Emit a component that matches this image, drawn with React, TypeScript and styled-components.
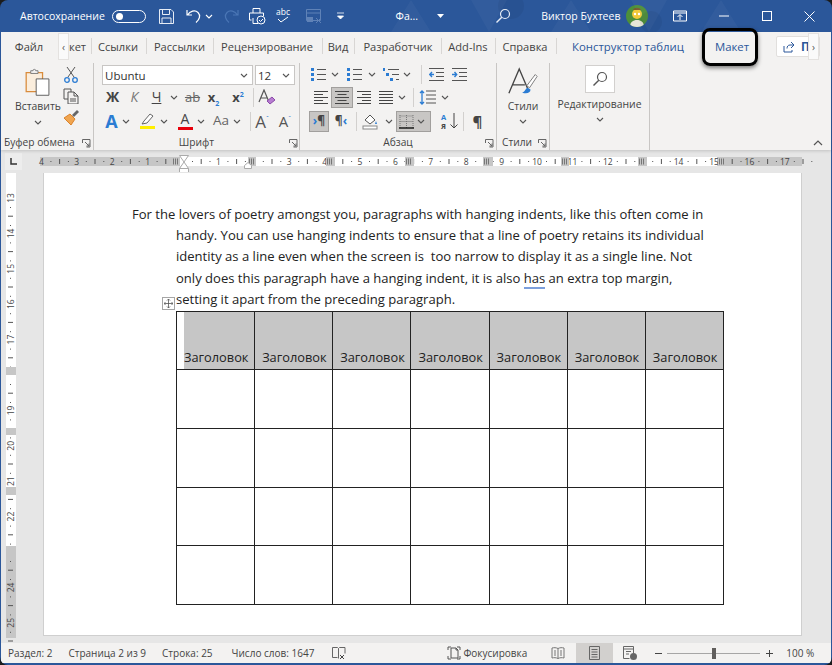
import React from "react";
import styled, { createGlobalStyle } from "styled-components";

const UI_FONT = `"Open Sans", "Noto Sans", "Liberation Sans", sans-serif`;

const tabs = [
  { label: "Ссылки", w: 40, sepMl: 6, ml: 6 },
  { label: "Рассылки", w: 51, sepMl: 8, ml: 7 },
  { label: "Рецензирование", w: 92, sepMl: 8, ml: 7 },
  { label: "Вид", w: 20, sepMl: 9, ml: 5 },
  { label: "Разработчик", w: 72, sepMl: 6, ml: 7 },
  { label: "Add-Ins", w: 42, sepMl: 7, ml: 5 },
  { label: "Справка", w: 46, sepMl: 6, ml: 6 },
];

const poetryColumns = [0, 1, 2, 3, 4, 5, 6];
const bodyRows = [0, 1, 2, 3];

const GlobalStyle = createGlobalStyle`
  html, body { margin: 0; padding: 0; background: #1c1c1c; }
  body { width: 832px; height: 665px; overflow: hidden; font-family: ${UI_FONT}; }
`;

const Window = styled.div`
  width: 832px;
  height: 665px;
  display: flex;
  flex-direction: column;
  background: #2b579a;
  border-radius: 8px;
  overflow: hidden;
  padding: 0 1px 2px 1px;
  box-sizing: border-box;
`;

const TitleBar = styled.header`
  height: 32px;
  flex: none;
  display: flex;
  align-items: center;
  position: relative;
  padding-left: 19px;
  color: #fff;
  font-size: 10.5px;
`;

const TitlePattern = styled.svg`
  position: absolute;
  left: 360px;
  top: 0;
  pointer-events: none;
`;

const TitleItem = styled.div<{ $ml?: number; $w?: number }>`
  margin-left: ${(p) => p.$ml ?? 0}px;
  width: ${(p) => (p.$w ? `${p.$w}px` : "auto")};
  display: flex;
  align-items: center;
  justify-content: center;
  white-space: nowrap;
  position: relative;
  font-weight: 500;
`;

const Toggle = styled.div`
  width: 29px;
  height: 11px;
  border: 1.5px solid #fff;
  border-radius: 8px;
  display: flex;
  align-items: center;
  padding-left: 3px;
  box-sizing: content-box;
  margin-left: 7px;
  &::before {
    content: "";
    width: 7px;
    height: 7px;
    border-radius: 50%;
    background: #fff;
  }
`;

const Avatar = styled.div`
  width: 22px;
  height: 22px;
  margin-left: 6px;
  border-radius: 50%;
  overflow: hidden;
  flex: none;
`;

const TabBar = styled.nav`
  height: 28px;
  flex: none;
  display: flex;
  align-items: center;
  position: relative;
  background: #f3f2f1;
  color: #444;
  font-size: 11.1px;
  z-index: 2;
`;

const Tab = styled.div<{ $ml: number; $w: number; $accent?: boolean }>`
  margin-left: ${(p) => p.$ml}px;
  width: ${(p) => p.$w}px;
  display: flex;
  justify-content: center;
  white-space: nowrap;
  position: relative;
  color: ${(p) => (p.$accent ? "#2b579a" : "#444")};
  font-size: ${(p) => (p.$accent ? "11.4px" : "inherit")};
  font-weight: ${(p) => (p.$accent ? 500 : 400)};
`;

const TabSep = styled.div<{ $ml: number }>`
  width: 1px;
  height: 16px;
  margin-left: ${(p) => p.$ml}px;
  background: #d8d6d4;
`;

const ScrollArrow = styled.div<{ $left: number }>`
  position: absolute;
  left: ${(p) => p.$left}px;
  top: 1px;
  width: 11px;
  height: 27px;
  background: #fafafa;
  border: 1px solid #e4e2e0;
  box-sizing: border-box;
  display: flex;
  align-items: center;
  justify-content: center;
  color: #555;
  font-size: 10px;
  line-height: 1;
`;

const Highlight = styled.div`
  position: absolute;
  left: -13px;
  right: -9px;
  top: -11px;
  bottom: -12px;
  border: 3px solid #000;
  border-radius: 8px;
  box-shadow: 0 2px 4px rgba(0, 0, 0, 0.5);
`;

const ShareButton = styled.div`
  position: absolute;
  left: 775px;
  top: 4px;
  width: 44px;
  height: 21px;
  background: #fff;
  border: 1px solid #e1dfdd;
  border-radius: 2px;
  box-sizing: border-box;
  display: flex;
  align-items: center;
  padding-left: 6px;
  gap: 6px;
  color: #2b579a;
  font-weight: 700;
  font-size: 11.5px;
`;

const Ribbon = styled.section`
  height: 90px;
  flex: none;
  display: flex;
  position: relative;
  background: #f3f2f1;
  box-shadow: 0 1px 3px rgba(0, 0, 0, 0.16);
  z-index: 1;
  padding-top: 3px;
  box-sizing: border-box;
`;

const Group = styled.div<{ $w: number }>`
  width: ${(p) => p.$w}px;
  flex: none;
  height: 87px;
  display: flex;
  flex-direction: column;
  border-right: 1px solid #c8c6c4;
  box-sizing: border-box;
  position: relative;
`;

const GroupBody = styled.div`
  flex: 1;
  min-height: 0;
  display: flex;
`;

const GroupLabel = styled.div<{ $pl?: number; $align?: string }>`
  height: 15px;
  font-size: 10.2px;
  line-height: 15px;
  color: #444;
  padding-left: ${(p) => p.$pl ?? 0}px;
  text-align: ${(p) => p.$align ?? "center"};
  white-space: nowrap;
`;

const Launcher = styled.svg<{ $right: number }>`
  position: absolute;
  right: ${(p) => p.$right}px;
  bottom: 2px;
`;

const BigColumn = styled.div<{ $w: number; $ml?: number; $pt?: number }>`
  width: ${(p) => p.$w}px;
  margin-left: ${(p) => p.$ml ?? 0}px;
  padding-top: ${(p) => p.$pt ?? 0}px;
  display: flex;
  flex-direction: column;
  align-items: center;
  font-size: 10.4px;
  color: #444;
  white-space: nowrap;
`;

const BigLabel = styled.div<{ $mt: number }>`
  margin-top: ${(p) => p.$mt}px;
  line-height: 15px;
`;

const SmallColumn = styled.div`
  width: 18px;
  display: flex;
  flex-direction: column;
  align-items: center;
  gap: 5px;
  padding-top: 3px;
`;

const Rows = styled.div<{ $pt: number }>`
  display: flex;
  flex-direction: column;
  padding-top: ${(p) => p.$pt}px;
`;

const Row = styled.div<{ $h: number; $pl?: number }>`
  height: ${(p) => p.$h}px;
  display: flex;
  align-items: center;
  padding-left: ${(p) => p.$pl ?? 0}px;
`;

const Combo = styled.div<{ $w: number; $ml?: number }>`
  width: ${(p) => p.$w}px;
  height: 20px;
  margin-left: ${(p) => p.$ml ?? 0}px;
  background: #fff;
  border: 1px solid #c8c6c4;
  box-sizing: border-box;
  display: flex;
  align-items: center;
  justify-content: space-between;
  padding: 0 4px 0 2px;
  font-size: 11.5px;
  color: #333;
`;

const Tool = styled.div<{ $w: number; $ml?: number; $on?: boolean; $h?: number }>`
  width: ${(p) => p.$w}px;
  height: ${(p) => p.$h ?? 21}px;
  margin-left: ${(p) => p.$ml ?? 0}px;
  flex: none;
  display: flex;
  align-items: center;
  justify-content: center;
  box-sizing: border-box;
  background: ${(p) => (p.$on ? "#c8c6c4" : "transparent")};
  border: ${(p) => (p.$on ? "1px solid #a19f9d" : "none")};
  color: #444;
`;

const ToolSep = styled.div<{ $ml: number }>`
  width: 1px;
  height: 19px;
  margin-left: ${(p) => p.$ml}px;
  background: #d2d0ce;
  flex: none;
`;

const Glyph = styled.span<{ $size?: number; $weight?: number; $italic?: boolean; $color?: string; $under?: boolean; $strike?: boolean }>`
  font-size: ${(p) => p.$size ?? 13}px;
  font-weight: ${(p) => p.$weight ?? 400};
  font-style: ${(p) => (p.$italic ? "italic" : "normal")};
  color: ${(p) => p.$color ?? "#444"};
  text-decoration: ${(p) => (p.$under ? "underline" : p.$strike ? "line-through" : "none")};
  line-height: 1;
  white-space: nowrap;
  sub, sup { font-size: 7px; color: #2b7cd3; line-height: 0; }
`;

const ColorGlyph = styled.div`
  display: flex;
  flex-direction: column;
  align-items: center;
  line-height: 1;
`;

const ColorBar = styled.div<{ $color: string }>`
  width: 15px;
  height: 3px;
  margin-top: 1px;
  background: ${(p) => p.$color};
`;

const Accent = styled.span`
  color: #2b7cd3;
`;

const SortIcon = styled.svg`
  overflow: visible;
`;

const SearchBox = styled.div`
  width: 30px;
  height: 28px;
  background: #fff;
  border: 1px solid #d2d0ce;
  box-sizing: border-box;
  display: flex;
  align-items: center;
  justify-content: center;
`;

const CollapseRibbon = styled.svg`
  position: absolute;
  right: 8px;
  bottom: 4px;
`;

const RulerRow = styled.div`
  height: 22px;
  flex: none;
  display: flex;
  align-items: center;
  background: #e6e6e6;
`;

const RulerCorner = styled.div`
  width: 17px;
  height: 17px;
  margin-left: 4px;
  background: #ededed;
  display: flex;
  align-items: center;
  justify-content: center;
  flex: none;
`;

const HorizontalRuler = styled.svg`
  margin-left: 18px;
  flex: none;
  overflow: visible;
`;

const Workspace = styled.main`
  flex: 1;
  min-height: 0;
  display: flex;
  background: #e6e6e6;
  padding: 1px 29px 7px 5px;
`;

const VerticalRuler = styled.svg`
  flex: none;
  overflow: visible;
`;

const Page = styled.article`
  width: 760px;
  margin-left: 27px;
  background: #fff;
  border-left: 1px solid #cfcfcf;
  border-bottom: 1px solid #cfcfcf;
  border-right: 1px solid #cfcfcf;
  box-sizing: border-box;
  padding: 31px 0 0 88px;
  color: #222;
  font-size: 13.05px;
  overflow: hidden;
`;

const Paragraph = styled.p`
  margin: 0;
  padding-left: 44px;
  text-indent: -44px;
  line-height: 21.2px;
  white-space: nowrap;
`;

const SpellMark = styled.span`
  border-bottom: 2px solid #7c9fdc;
`;

const TableWrap = styled.div`
  position: relative;
  margin: 1px 0 0 44px;
  width: 548px;
`;

const MoveHandle = styled.div`
  position: absolute;
  left: -14px;
  top: -14px;
  width: 13px;
  height: 13px;
  background: #fff;
  border: 1px solid #a6a6a6;
  box-sizing: border-box;
  display: flex;
  align-items: center;
  justify-content: center;
`;

const Table = styled.table`
  border-collapse: collapse;
  table-layout: fixed;
  width: 548px;
  height: 294px;
`;

const HeadCell = styled.td<{ $first?: boolean }>`
  border: 1px solid #222;
  background: #c6c6c6;
  box-shadow: ${(p) => (p.$first ? "inset 7px 0 0 #fff" : "none")};
  vertical-align: bottom;
  padding: 0 0 3px 7px;
  height: 54px;
  white-space: nowrap;
  overflow: hidden;
  font-size: 12.8px;
`;

const BodyCell = styled.td`
  border: 1px solid #222;
  padding: 0;
`;

const StatusBar = styled.footer`
  height: 20px;
  flex: none;
  display: flex;
  align-items: center;
  background: #f3f2f1;
  color: #444;
  font-size: 10px;
  white-space: nowrap;
`;

const StatusItem = styled.div<{ $ml: number; $w?: number; $on?: boolean }>`
  margin-left: ${(p) => p.$ml}px;
  width: ${(p) => (p.$w ? `${p.$w}px` : "auto")};
  height: 100%;
  display: flex;
  align-items: center;
  justify-content: ${(p) => (p.$w ? "center" : "flex-start")};
  gap: 2px;
  flex: none;
  background: ${(p) => (p.$on ? "#d2d0ce" : "transparent")};
`;

const ZoomSlider = styled.div`
  width: 93px;
  height: 1px;
  margin-left: 5px;
  background: #a6a6a6;
  position: relative;
  flex: none;
`;

const ZoomThumb = styled.div`
  position: absolute;
  left: 45px;
  top: -5px;
  width: 4px;
  height: 11px;
  background: #605e5c;
`;

/* small drawings */
const blue = "#2b7cd3";

const Caret = ({ color = "#555" }: { color?: string }) => (
  <svg width="8" height="5" viewBox="0 0 8 5">
    <path d="M1 1l3 3 3-3" fill="none" stroke={color} strokeWidth="1.1" />
  </svg>
);

const LauncherIcon = ({ right }: { right: number }) => (
  <Launcher $right={right} width="9" height="9" viewBox="0 0 9 9">
    <path d="M.5 4V.5h7.5V8H4.5M3 3l4 4M4.5 7H7V4.5" fill="none" stroke="#666" />
  </Launcher>
);

const BulletIcon = ({ kind }: { kind: "bullet" | "number" | "multi" }) => {
  const lines = kind === "multi" ? [[5, 2], [9, 7], [13, 12]] : [[7, 2], [7, 7], [7, 12]];
  return (
    <svg width="17" height="15" viewBox="0 0 17 15">
      {lines.map(([x, y]) => (
        <g key={y}>
          <rect x={x - 6} y={y - 1} width="3" height="3" fill={blue} />
          <rect x={x} y={y} width={16 - x} height="1" fill="#555" />
        </g>
      ))}
    </svg>
  );
};

const AlignIcon = ({ mode }: { mode: "left" | "center" | "right" | "justify" }) => {
  const widths = mode === "justify" ? [14, 14, 14, 14, 14] : [14, 9, 14, 9, 14];
  return (
    <svg width="14" height="13" viewBox="0 0 14 13">
      {widths.map((w, i) => {
        const x = mode === "center" ? (14 - w) / 2 : mode === "right" ? 14 - w : 0;
        return <rect key={i} x={x} y={i * 3} width={w} height="1" fill="#444" />;
      })}
    </svg>
  );
};

const IndentIcon = ({ out }: { out?: boolean }) => (
  <svg width="15" height="13" viewBox="0 0 15 13">
    <path d="M0 .5h15M7 4.5h8M7 8.5h8M0 12.5h15" stroke="#555" />
    <path d={out ? "M5 6.5H1M3 4L.8 6.5 3 9" : "M0 6.5h4M2.5 4l2.2 2.5L2.5 9"} fill="none" stroke={blue} strokeWidth="1.4" />
  </svg>
);

const Avatarpic = () => (
  <svg width="22" height="22" viewBox="0 0 22 22">
    <rect width="22" height="22" fill="#4d8f3a" />
    <path d="M4 22c0-5 3-7 7-7s7 2 7 7z" fill="#e8e6d8" />
    <circle cx="11" cy="9" r="5" fill="#f0c93a" />
    <path d="M7 5c1-3 7-3 8 0z" fill="#7b5a2e" />
    <circle cx="9" cy="9" r="1.2" fill="#fff" />
    <circle cx="13" cy="9" r="1.2" fill="#fff" />
  </svg>
);

const PasteIcon = () => (
  <svg width="26" height="30" viewBox="0 0 28 33">
    <path d="M1 5h18v21H1z" fill="#fbeedd" stroke="#d98c3c" strokeWidth="1.4" />
    <path d="M6 6V3h2.5a1.5 1.5 0 013 0H14v3z" fill="#f3f2f1" stroke="#777" />
    <path d="M12 12h14v18H12z" fill="#fff" stroke="#555" />
  </svg>
);

const rulerNumbers = Array.from({ length: 22 }, (_, i) => i - 4);
const CM = 35.4;

const HRuler = () => {
  const zero = 183 - 40;
  const markers = [[132, 8], [208, 8], [286, 9], [365, 9], [443, 10], [521, 8], [598, 9], [678, 7]];
  return (
    <HorizontalRuler width="762" height="9" viewBox="0 0 762 9">
      <rect width="762" height="9" fill="#fff" />
      <rect width="135" height="9" fill="#c6c6c6" />
      <rect x="677" width="85" height="9" fill="#c6c6c6" />
      {rulerNumbers.map((n) => {
        const x = zero + n * CM;
        if (x < 0 || x > 760) return null;
        return (
          <g key={n}>
            {n !== 0 && n !== 13 && n !== 2 && (
              <text x={x} y="8" fontSize="8.5" textAnchor="middle" fontFamily={UI_FONT} fill="#444">
                {Math.abs(n)}
              </text>
            )}
            <rect x={x + 9} y="4" width="1" height="1" fill="#555" />
            <rect x={x + 17.7} y="2" width="1" height="5" fill="#555" />
            <rect x={x + 26.5} y="4" width="1" height="1" fill="#555" />
          </g>
        );
      })}
      {markers.map(([x, w]) => (
        <g key={x}>
          <rect x={x} width={w} height="9" fill="#c6c6c6" />
          <path d={`M${x + 1.5} 1.5v6M${x + 3.5} 1.5v6M${x + 5.5} 1.5v6`} stroke="#777" />
        </g>
      ))}
      <path d="M139.500 -1.500h9l-4.500 6.500zM139.500 11.500l4.500-6.500 4.500 6.500zM139.500 11.500h9v4h-9z" fill="#fff" stroke="#aaa" />
      <path d="M204.500 11.500v-3l3.500-3 3.500 3v3z" fill="#fff" stroke="#aaa" />
    </HorizontalRuler>
  );
};

const VRuler = () => {
  const numbers = [13, 14, 15, 16, 17, 19, 20, 21, 22, 24, 25];
  const markers = [[194, 8], [255, 7], [314, 8], [373, 8]];
  return (
    <VerticalRuler width="10" height="465" viewBox="0 0 10 465">
      <rect width="10" height="380" fill="#fff" />
      <rect y="380" width="10" height="85" fill="#c6c6c6" />
      {Array.from({ length: 14 }, (_, i) => {
        const y = 25 + i * CM;
        return (
          <g key={i}>
            <rect x="2" y={y + 17.7} width="5" height="1" fill="#555" />
            <rect x="4" y={y + 9} width="1" height="1" fill="#555" />
            <rect x="4" y={y + 27} width="1" height="1" fill="#555" />
          </g>
        );
      })}
      {numbers.map((n) => {
        const y = 25 + (n - 13) * CM;
        return (
          <text key={n} transform={`translate(8 ${y}) rotate(-90)`} fontSize="8.5" textAnchor="middle" fontFamily={UI_FONT} fill="#444">
            {n}
          </text>
        );
      })}
      {markers.map(([y, h]) => (
        <rect key={y} y={y} width="10" height={h} fill="#c6c6c6" />
      ))}
    </VerticalRuler>
  );
};

export default function App() {
  return (
    <>
      <GlobalStyle />
      <Window>
        <TitleBar>
          <TitlePattern width="380" height="32" viewBox="0 0 380 32">
            <path d="M30 32L50 0l20 32zM110 0l18 32 18-32zM190 32l20-32 20 32zM270 0l18 32 18-32zM340 32l20-32 20 32z" fill="rgba(255,255,255,.035)" />
            <circle cx="150" cy="6" r="13" fill="rgba(0,0,0,.05)" />
            <circle cx="290" cy="22" r="11" fill="rgba(0,0,0,.05)" />
          </TitlePattern>
          <TitleItem>Автосохранение</TitleItem>
          <Toggle />
          <TitleItem $ml={12}>
            <svg width="17" height="17" viewBox="0 0 17 17">
              <path d="M1.5 1.5h11.5l2.5 2.5v11.5h-14zM4.5 1.5v5h7v-5M4 15.5v-5.5h9v5.5" fill="none" stroke="#e6ecf5" />
            </svg>
          </TitleItem>
          <TitleItem $ml={11}>
            <svg width="16" height="16" viewBox="0 0 16 16">
              <path d="M1 2v5h5M1.5 7C4 3 9 1.500 12 4.500c3 3 1.500 7-2 10" fill="none" stroke="#fff" strokeWidth="1.2" />
            </svg>
          </TitleItem>
          <TitleItem $ml={3}><Caret color="#fff" /></TitleItem>
          <TitleItem $ml={10}>
            <svg width="16" height="16" viewBox="0 0 16 16">
              <path d="M15 2v5h-5M14.500 7C12 3 7 1.500 4 4.500c-3 3-1.500 7 2 10" fill="none" stroke="#4a76b5" strokeWidth="1.2" />
            </svg>
          </TitleItem>
          <TitleItem $ml={9}>
            <svg width="18" height="18" viewBox="0 0 18 18">
              <path d="M5 6V1.500h7V6M3.500 13H1.500V6h14v3M5 11v5.500h5" fill="none" stroke="#fff" />
              <circle cx="13" cy="13" r="4" fill="none" stroke="#fff" />
              <path d="M11 13l1.500 1.500L15 12" fill="none" stroke="#fff" />
            </svg>
          </TitleItem>
          <TitleItem $ml={10}>
            <svg width="16" height="18" viewBox="0 0 16 18">
              <text x="0" y="8" fontSize="8.500" fontFamily={UI_FONT} fill="#fff">abc</text>
              <path d="M2 12l3 3 7-5" fill="none" stroke="#fff" />
            </svg>
          </TitleItem>
          <TitleItem $ml={14}>
            <svg width="17" height="15" viewBox="0 0 17 15">
              <path d="M.5.500h14v11h-8M.5.500v11h4M.5 4h14" fill="none" stroke="#5f82b7" />
              <path d="M10 9l5 5M15 9l-5 5" stroke="#5f82b7" />
              <rect x="1" y="8" width="6" height="5" fill="#5f82b7" />
            </svg>
          </TitleItem>
          <TitleItem $ml={13}>
            <svg width="9" height="8" viewBox="0 0 9 8">
              <path d="M1 1h7M1.500 4h6l-3 3z" fill="#fff" stroke="#fff" strokeWidth=".8" />
            </svg>
          </TitleItem>
          <TitleItem $ml={53} $w={18}>Фа...</TitleItem>
          <TitleItem $ml={21}>
            <svg width="7" height="4" viewBox="0 0 7 4"><path d="M0 0h7L3.500 4z" fill="#fff" /></svg>
          </TitleItem>
          <TitleItem $ml={51}>
            <svg width="16" height="16" viewBox="0 0 16 16">
              <circle cx="10" cy="6" r="4.500" fill="none" stroke="#e6ecf5" strokeWidth="1.200" />
              <path d="M6.800 9.200L1.500 14.500" stroke="#e6ecf5" strokeWidth="1.400" />
            </svg>
          </TitleItem>
          <TitleItem $ml={31} $w={78}>Виктор Бухтеев</TitleItem>
          <Avatar><Avatarpic /></Avatar>
          <TitleItem $ml={25}>
            <svg width="14" height="12" viewBox="0 0 14 12">
              <path d="M.500 1h13v10H.500zM.500 3h13M7 10V5M4.500 7L7 4.500 9.500 7" fill="none" stroke="#fff" />
            </svg>
          </TitleItem>
          <TitleItem $ml={32}>
            <svg width="10" height="10" viewBox="0 0 10 10"><path d="M0 5h10" stroke="#fff" /></svg>
          </TitleItem>
          <TitleItem $ml={33}>
            <svg width="10" height="10" viewBox="0 0 10 10"><rect x=".5" y=".5" width="9" height="9" fill="none" stroke="#fff" /></svg>
          </TitleItem>
          <TitleItem $ml={32}>
            <svg width="11" height="11" viewBox="0 0 11 11"><path d="M.5.500l10 10M10.500.500l-10 10" stroke="#fff" /></svg>
          </TitleItem>
        </TitleBar>

        <TabBar>
          <Tab $ml={14} $w={28}>Файл</Tab>
          <ScrollArrow $left={57}>‹</ScrollArrow>
          <Tab $ml={27} $w={15}>кет</Tab>
          {tabs.map((t) => (
            <React.Fragment key={t.label}>
              <TabSep $ml={t.sepMl} />
              <Tab $ml={t.ml} $w={t.w}>{t.label}</Tab>
            </React.Fragment>
          ))}
          <TabSep $ml={8} />
          <Tab $ml={15} $w={112} $accent>Конструктор таблиц</Tab>
          <Tab $ml={31} $w={34} $accent>
            Макет
            <Highlight />
          </Tab>
          <ShareButton>
            <svg width="12" height="12" viewBox="0 0 12 12">
              <path d="M8 1l3 3-3 3M11 4H7C5 4 4 5.500 4 7.500M1 5v6h8V9" fill="none" stroke="#2b579a" />
            </svg>
            П
          </ShareButton>
          <ScrollArrow $left={807}>›</ScrollArrow>
        </TabBar>

        <Ribbon>
          <Group $w={93}>
            <GroupBody>
              <BigColumn $w={48} $ml={13} $pt={5}>
                <PasteIcon />
                <BigLabel $mt={1}>Вставить</BigLabel>
                <BigLabel $mt={0}><Caret /></BigLabel>
              </BigColumn>
              <SmallColumn>
                <svg width="14" height="17" viewBox="0 0 14 17">
                  <path d="M3 1l7 10M11 1L4 11" stroke="#555" />
                  <circle cx="3" cy="14" r="2.300" fill="none" stroke={blue} strokeWidth="1.300" />
                  <circle cx="11" cy="14" r="2.300" fill="none" stroke={blue} strokeWidth="1.300" />
                </svg>
                <svg width="16" height="16" viewBox="0 0 16 16">
                  <path d="M1 1h7v3M1 1v10h4M5 4h6l4 4v8H5zM11 4v4h4M7 11h6M7 13h6" fill="none" stroke="#555" />
                </svg>
                <svg width="17" height="16" viewBox="0 0 17 16">
                  <path d="M1 9l6-4 5 5-4 6z" fill="#f0a550" stroke="#d9822b" />
                  <path d="M9 6l5-5 2 2-5 5z" fill="#666" />
                </svg>
              </SmallColumn>
            </GroupBody>
            <GroupLabel $pl={3} $align="left">Буфер обмена</GroupLabel>
            <LauncherIcon right={2} />
          </Group>

          <Group $w={206}>
            <GroupBody>
              <Rows $pt={2}>
                <Row $h={20} $pl={8}>
                  <Combo $w={151}>Ubuntu<Caret /></Combo>
                  <Combo $w={40} $ml={2}>12<Caret /></Combo>
                </Row>
                <Row $h={24} $pl={8}>
                  <Tool $w={21}><Glyph $size={14} $weight={700}>Ж</Glyph></Tool>
                  <Tool $w={23}><Glyph $size={14} $italic $color="#777">К</Glyph></Tool>
                  <Tool $w={21}><Glyph $size={14} $under>Ч</Glyph></Tool>
                  <Tool $w={14}><Caret /></Tool>
                  <Tool $w={23}><Glyph $size={13} $strike $color="#666">ab</Glyph></Tool>
                  <Tool $w={19}><Glyph $size={13} $weight={700}>x<sub>2</sub></Glyph></Tool>
                  <Tool $w={30}><Glyph $size={13} $weight={700}>x<sup>2</sup></Glyph></Tool>
                  <ToolSep $ml={0} />
                  <Tool $w={24}>
                    <svg width="17" height="17" viewBox="0 0 17 17">
                      <path d="M1 13L6 1l5 12M3 9h6" fill="none" stroke="#555" strokeWidth="1.200" />
                      <path d="M9 12l5-4 3 3-5 4z" fill="#b77dd1" stroke="#8a4aa8" />
                    </svg>
                  </Tool>
                </Row>
                <Row $h={24} $pl={8}>
                  <Tool $w={19}><Glyph $size={18} $weight={700} $color={blue}>A</Glyph></Tool>
                  <Tool $w={10}><Caret /></Tool>
                  <Tool $w={20} $ml={6}>
                    <ColorGlyph>
                      <svg width="15" height="12" viewBox="0 0 15 12">
                        <path d="M2 11l2-3 6-7 3 2-6 7z" fill="#fff" stroke="#666" />
                      </svg>
                      <ColorBar $color="#ffef00" />
                    </ColorGlyph>
                  </Tool>
                  <Tool $w={12} $ml={1}><Caret /></Tool>
                  <Tool $w={20} $ml={5}>
                    <ColorGlyph>
                      <Glyph $size={14}>A</Glyph>
                      <ColorBar $color="#e8000b" />
                    </ColorGlyph>
                  </Tool>
                  <Tool $w={12}><Caret /></Tool>
                  <Tool $w={24} $ml={2}><Glyph $size={13.500} $color="#666">Aa</Glyph></Tool>
                  <Tool $w={8}><Caret /></Tool>
                  <ToolSep $ml={9} />
                  <Tool $w={22}><Glyph $size={17} $color="#555">A<sup>ˆ</sup></Glyph></Tool>
                  <Tool $w={22} $ml={1}><Glyph $size={15} $color="#555">A<sup>ˇ</sup></Glyph></Tool>
                </Row>
              </Rows>
            </GroupBody>
            <GroupLabel>Шрифт</GroupLabel>
            <LauncherIcon right={1} />
          </Group>

          <Group $w={197}>
            <GroupBody>
              <Rows $pt={0}>
                <Row $h={23} $pl={10}>
                  <Tool $w={17}><BulletIcon kind="bullet" /></Tool>
                  <Tool $w={16}><Caret /></Tool>
                  <Tool $w={17} $ml={3}><BulletIcon kind="number" /></Tool>
                  <Tool $w={17}><Caret /></Tool>
                  <Tool $w={17} $ml={3}><BulletIcon kind="multi" /></Tool>
                  <Tool $w={14}><Caret /></Tool>
                  <ToolSep $ml={7} />
                  <Tool $w={16} $ml={6}><IndentIcon out /></Tool>
                  <Tool $w={16} $ml={7}><IndentIcon /></Tool>
                </Row>
                <Row $h={23} $pl={10}>
                  <Tool $w={21}><AlignIcon mode="left" /></Tool>
                  <Tool $w={22} $on><AlignIcon mode="center" /></Tool>
                  <Tool $w={22}><AlignIcon mode="right" /></Tool>
                  <Tool $w={22}><AlignIcon mode="justify" /></Tool>
                  <Tool $w={9}><Caret /></Tool>
                  <ToolSep $ml={7} />
                  <Tool $w={26}>
                    <svg width="17" height="15" viewBox="0 0 17 15">
                      <path d="M7 1h10M7 5h10M7 9h10M7 13h10" stroke="#555" />
                      <path d="M3 1v13M1 3l2-2 2 2M1 12l2 2 2-2" fill="none" stroke={blue} strokeWidth="1.300" />
                    </svg>
                  </Tool>
                  <Tool $w={9}><Caret /></Tool>
                </Row>
                <Row $h={24} $pl={9}>
                  <Tool $w={20} $on>
                    <Glyph $size={12} $weight={700}><Accent>›</Accent>¶</Glyph>
                  </Tool>
                  <Tool $w={24}>
                    <Glyph $size={12} $weight={700}>¶<Accent>‹</Accent></Glyph>
                  </Tool>
                  <ToolSep $ml={3} />
                  <Tool $w={27}>
                    <svg width="17" height="17" viewBox="0 0 17 17">
                      <path d="M3 7l5-5 5 5-5 4z" fill="#fff" stroke="#555" />
                      <path d="M14 8l1 3h-2z" fill={blue} />
                      <rect x="1" y="13" width="14" height="3" fill="#fff" stroke="#888" />
                    </svg>
                  </Tool>
                  <Tool $w={9}><Caret /></Tool>
                  <Tool $w={35} $ml={3} $on>
                    <svg width="15" height="15" viewBox="0 0 15 15">
                      <path d="M.5 2h14M.5 7.500h14M7.500 1v13M1 1v13M14 1v13" stroke="#777" strokeDasharray="1 1" />
                      <path d="M0 14h15" stroke="#111" strokeWidth="1.400" />
                    </svg>
                    <Tool $w={14}><Caret /></Tool>
                  </Tool>
                  <Tool $w={19} $ml={9}>
                    <SortIcon width="18" height="18" viewBox="0 0 18 18">
                      <text x="0" y="8" fontSize="7.500" fontWeight="700" fontFamily={UI_FONT} fill={blue}>А</text>
                      <text x="0" y="17" fontSize="7.500" fontWeight="700" fontFamily={UI_FONT} fill="#444">Я</text>
                      <path d="M13 1v15M9.500 12.500L13 16l3.500-3.500" fill="none" stroke="#444" />
                    </SortIcon>
                  </Tool>
                  <ToolSep $ml={4} />
                  <Tool $w={27}><Glyph $size={15} $weight={700}>¶</Glyph></Tool>
                </Row>
              </Rows>
            </GroupBody>
            <GroupLabel>Абзац</GroupLabel>
            <LauncherIcon right={2} />
          </Group>

          <Group $w={53}>
            <GroupBody>
              <BigColumn $w={55} $pt={4}>
                <svg width="32" height="32" viewBox="0 0 34 34">
                  <path d="M2 28L13 2l9 21M6 19h13" fill="none" stroke="#444" strokeWidth="1.400" />
                  <path d="M21 20l9-12 2 2-8 12z" fill="#fff" stroke="#777" />
                  <path d="M16 27c3 0 4-5 6-5l3 2c0 4-5 5-9 3z" fill={blue} />
                </svg>
                <BigLabel $mt={0}>Стили</BigLabel>
                <BigLabel $mt={-1}><Caret /></BigLabel>
              </BigColumn>
            </GroupBody>
            <GroupLabel $pl={5} $align="left">Стили</GroupLabel>
            <LauncherIcon right={2} />
          </Group>

          <Group $w={100}>
            <GroupBody>
              <BigColumn $w={100} $pt={2}>
                <SearchBox>
                  <svg width="16" height="16" viewBox="0 0 16 16">
                    <circle cx="10" cy="6" r="4.500" fill="none" stroke="#555" strokeWidth="1.200" />
                    <path d="M6.800 9.200L1.500 14.500" stroke="#555" strokeWidth="1.400" />
                  </svg>
                </SearchBox>
                <BigLabel $mt={4}>Редактирование</BigLabel>
                <BigLabel $mt={-1}><Caret /></BigLabel>
              </BigColumn>
            </GroupBody>
          </Group>
          <CollapseRibbon width="10" height="6" viewBox="0 0 10 6">
            <path d="M1 5l4-4 4 4" fill="none" stroke="#555" strokeWidth="1.200" />
          </CollapseRibbon>
        </Ribbon>

        <RulerRow>
          <RulerCorner>
            <svg width="7" height="7" viewBox="0 0 7 7"><path d="M1 0v6h6" fill="none" stroke="#333" strokeWidth="1.500" /></svg>
          </RulerCorner>
          <HRuler />
        </RulerRow>

        <Workspace>
          <VRuler />
          <Page>
            <Paragraph>
              For the lovers of poetry amongst you, paragraphs with hanging indents, like this often come in<br />
              handy. You can use hanging indents to ensure that a line of poetry retains its individual<br />
              identity as a line even when the screen is&nbsp; too narrow to display it as a single line. Not<br />
              only does this paragraph have a hanging indent, it is also <SpellMark>has</SpellMark> an extra top margin,<br />
              setting it apart from the preceding paragraph.
            </Paragraph>
            <TableWrap>
              <MoveHandle>
                <svg width="9" height="9" viewBox="0 0 9 9">
                  <path d="M4.500 0v9M0 4.500h9M3 1.500L4.500 0 6 1.500M3 7.500L4.500 9 6 7.500M1.500 3L0 4.500 1.500 6M7.500 3L9 4.500 7.500 6" fill="none" stroke="#555" strokeWidth=".8" />
                </svg>
              </MoveHandle>
              <Table>
                <tbody>
                  <tr>
                    {poetryColumns.map((c) => (
                      <HeadCell key={c} $first={c === 0}>Заголовок</HeadCell>
                    ))}
                  </tr>
                  {bodyRows.map((r) => (
                    <tr key={r}>
                      {poetryColumns.map((c) => (
                        <BodyCell key={c} />
                      ))}
                    </tr>
                  ))}
                </tbody>
              </Table>
            </TableWrap>
          </Page>
        </Workspace>

        <StatusBar>
          <StatusItem $ml={7}>Раздел: 2</StatusItem>
          <StatusItem $ml={16}>Страница 2 из 9</StatusItem>
          <StatusItem $ml={16}>Строка: 25</StatusItem>
          <StatusItem $ml={19}>Число слов: 1647</StatusItem>
          <StatusItem $ml={18}>
            <svg width="14" height="13" viewBox="0 0 14 13">
              <path d="M.5.5h5l1 1 1-1h5.500v6M6.500 1.500v10M.5.5v10h5" fill="none" stroke="#666" />
              <path d="M8 8l4 4M12 8l-4 4" stroke="#444" />
            </svg>
          </StatusItem>
          <StatusItem $ml={101}>
            <svg width="14" height="14" viewBox="0 0 14 14">
              <path d="M1 4V1h3M10 1h3v3M1 10v3h3M10 13h3v-3M4 2h5l2 2v8H4zM9 2v2h2" fill="none" stroke="#555" />
            </svg>
            Фокусировка
          </StatusItem>
          <StatusItem $ml={19} $w={24}>
            <svg width="14" height="13" viewBox="0 0 14 13">
              <path d="M7 1.500C5 .5 3 .5 1 1v10c2-.5 4-.5 6 .5 2-1 4-1 6-.5V1c-2-.5-4-.5-6 .5zM7 1.500v10M3 4h2M3 6h2M3 8h2M9 4h2M9 6h2M9 8h2" fill="none" stroke="#777" />
            </svg>
          </StatusItem>
          <StatusItem $ml={6} $w={37} $on>
            <svg width="11" height="14" viewBox="0 0 11 14">
              <path d="M.5.5h10v13H.5zM2.500 3.500h6M2.500 6h6M2.500 8.500h6M2.500 11h6" fill="none" stroke="#666" />
            </svg>
          </StatusItem>
          <StatusItem $ml={6} $w={22}>
            <svg width="14" height="14" viewBox="0 0 14 14">
              <path d="M.5.5h10v7M.5.5v12h6M.5 3h10M3 5.500h5M3 8h3" fill="none" stroke="#666" />
              <circle cx="10.500" cy="10.500" r="3.500" fill="#666" />
            </svg>
          </StatusItem>
          <StatusItem $ml={14}>
            <svg width="7" height="7" viewBox="0 0 7 7"><path d="M0 3.500h7" stroke="#444" /></svg>
          </StatusItem>
          <ZoomSlider><ZoomThumb /></ZoomSlider>
          <StatusItem $ml={6}>
            <svg width="7" height="7" viewBox="0 0 7 7"><path d="M0 3.500h7M3.500 0v7" stroke="#444" /></svg>
          </StatusItem>
          <StatusItem $ml={13}>100 %</StatusItem>
        </StatusBar>
      </Window>
    </>
  );
}
